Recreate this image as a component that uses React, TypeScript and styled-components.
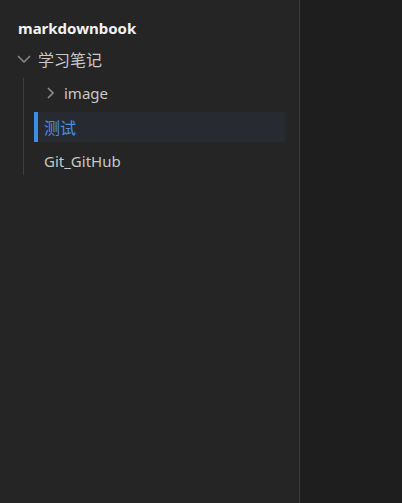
import React from 'react';
import { createGlobalStyle, styled } from 'styled-components';

const GlobalStyle = createGlobalStyle`
  html, body {
    margin: 0;
    padding: 0;
    height: 100%;
    background: #1e1e1e;
  }
  #root {
    height: 100%;
  }
  * {
    box-sizing: border-box;
  }
`;

const Layout = styled.div`
  display: flex;
  height: 503px;
  font-family: 'Noto Sans', 'Noto Sans CJK SC', sans-serif;
`;

const Sidebar = styled.aside`
  width: 300px;
  flex-shrink: 0;
  background: #252525;
  border-right: 1px solid #3a3a3a;
  padding: 16px 14px 0 0;
`;

const Editor = styled.main`
  flex: 1;
  background: #1e1e1e;
`;

const Title = styled.div`
  padding-left: 18px;
  height: 24px;
  line-height: 24px;
  font-size: 15px;
  font-weight: 700;
  color: #f2f2f2;
  margin-bottom: 4px;
`;

const Row = styled.div<{ $indent: number; $active?: boolean }>`
  position: relative;
  display: flex;
  align-items: center;
  height: 30px;
  margin: 0 0 4px;
  padding-left: ${p => p.$indent}px;
  font-size: 15px;
  color: ${p => (p.$active ? '#4b8fe2' : '#c8c8c8')};
  background: ${p => (p.$active ? '#272b31' : 'transparent')};
  margin-left: ${p => (p.$active ? '34px' : '0')};
  ${p =>
    p.$active &&
    `
    &::before {
      content: '';
      position: absolute;
      left: 0;
      top: 0;
      bottom: 0;
      width: 4px;
      background: #3a8ee8;
    }
  `}
`;

const Caret = styled.span`
  display: inline-flex;
  width: 20px;
  justify-content: center;
  margin-right: 4px;
  color: #8a8a8a;
`;

const Children = styled.div`
  position: relative;
  &::before {
    content: '';
    position: absolute;
    left: 23px;
    top: 0;
    bottom: 1px;
    width: 1px;
    background: #3e3e3e;
  }
`;

const Label = styled.span<{ $cjk?: boolean }>`
  white-space: nowrap;
  font-size: ${p => (p.$cjk ? '16px' : '15px')};
`;

function ChevronDown() {
  return (
    <svg width="14" height="8" viewBox="0 0 14 8" fill="none">
      <path d="M1 1l6 6 6-6" stroke="currentColor" strokeWidth="1.5" />
    </svg>
  );
}

function ChevronRight() {
  return (
    <svg width="7" height="12" viewBox="0 0 7 12" fill="none">
      <path d="M1 1l5 5-5 5" stroke="currentColor" strokeWidth="1.7" />
    </svg>
  );
}

export default function App() {
  return (
    <>
      <GlobalStyle />
      <Layout>
        <Sidebar>
          <Title>markdownbook</Title>
          <Row $indent={14}>
            <Caret>
              <ChevronDown />
            </Caret>
            <Label $cjk>学习笔记</Label>
          </Row>
          <Children>
            <Row $indent={40}>
              <Caret>
                <ChevronRight />
              </Caret>
              <Label>image</Label>
            </Row>
            <Row $indent={10} $active>
              <Label $cjk>测试</Label>
            </Row>
            <Row $indent={44}>
              <Label>Git_GitHub</Label>
            </Row>
          </Children>
        </Sidebar>
        <Editor />
      </Layout>
    </>
  );
}
